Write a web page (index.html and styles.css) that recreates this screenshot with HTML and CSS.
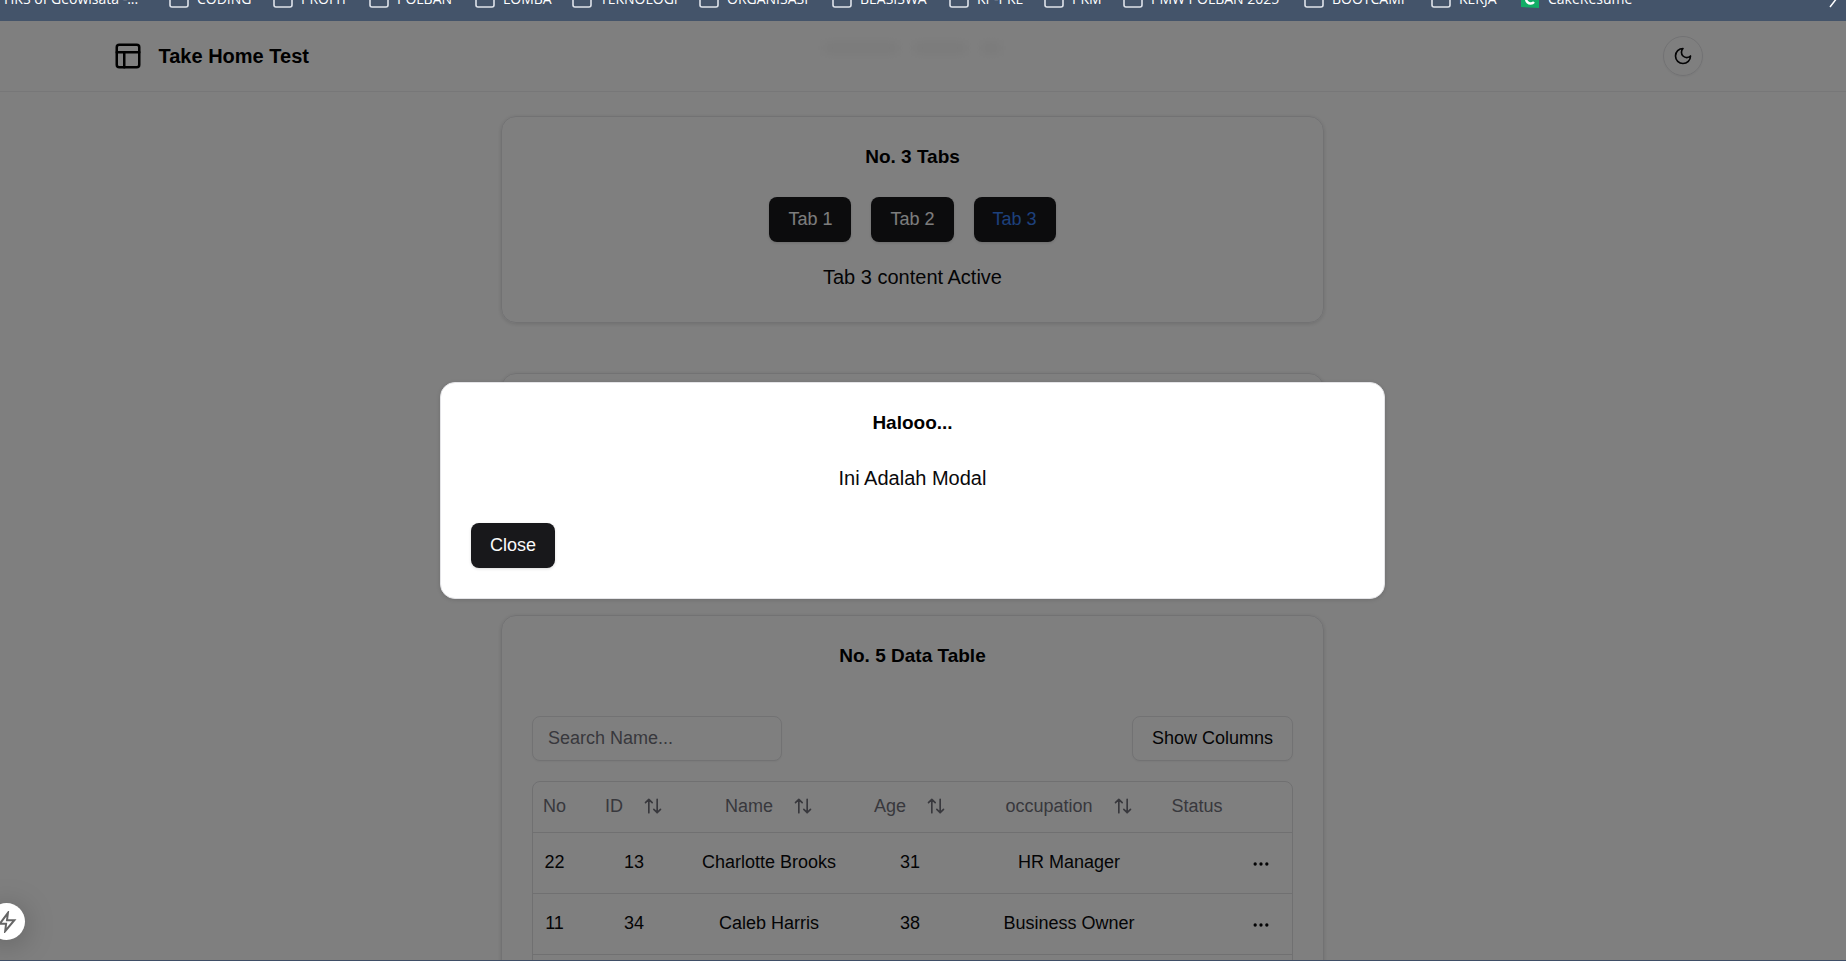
FILE: index.html
```html
<!DOCTYPE html>
<html lang="en">
<head>
<meta charset="utf-8">
<title>Take Home Test</title>
<link rel="stylesheet" href="styles.css">
</head>
<body>
<svg class="defs" aria-hidden="true">
  <symbol id="folder" viewBox="0 0 20 20"><path d="M1 1v15a2 2 0 0 0 2 2h14a2 2 0 0 0 2-2V1z" fill="none" stroke="#dfe3ea" stroke-width="1.6"/></symbol>
  <symbol id="sort" viewBox="0 0 24 24"><path d="m21 16-4 4-4-4M17 20V4M3 8l4-4 4 4M7 4v16" fill="none" stroke="currentColor" stroke-width="2" stroke-linecap="round" stroke-linejoin="round"/></symbol>
  <symbol id="dots" viewBox="0 0 24 24"><g fill="currentColor" stroke="currentColor" stroke-width="2"><circle cx="12" cy="12" r="1"/><circle cx="19" cy="12" r="1"/><circle cx="5" cy="12" r="1"/></g></symbol>
</svg>
<nav class="bookmarks" aria-label="Bookmarks">
  <a href="#" class="first">HKS of Geowisata -...</a>
  <a href="#"><svg><use href="#folder"/></svg>CODING</a>
  <a href="#"><svg><use href="#folder"/></svg>PROFIT</a>
  <a href="#"><svg><use href="#folder"/></svg>POLBAN</a>
  <a href="#"><svg><use href="#folder"/></svg>LOMBA</a>
  <a href="#"><svg><use href="#folder"/></svg>TEKNOLOGI</a>
  <a href="#"><svg><use href="#folder"/></svg>ORGANISASI</a>
  <a href="#"><svg><use href="#folder"/></svg>BEASISWA</a>
  <a href="#"><svg><use href="#folder"/></svg>KP-PKL</a>
  <a href="#"><svg><use href="#folder"/></svg>PKM</a>
  <a href="#"><svg><use href="#folder"/></svg>PMW POLBAN 2025</a>
  <a href="#"><svg><use href="#folder"/></svg>BOOTCAMP</a>
  <a href="#"><svg><use href="#folder"/></svg>KERJA</a>
  <a href="#"><svg viewBox="0 0 20 20"><path d="M1 0h18v19L1 18z" fill="#12ad66"/><path d="M14 13a4.500 4.500 0 1 1 0-6" fill="none" stroke="#fff" stroke-width="2.500"/></svg>CakeResume</a>
  <button class="more" aria-label="More bookmarks"><svg viewBox="0 0 20 20"><path d="m6 1 7 8-7 9" fill="none" stroke="#fff" stroke-width="1.500"/></svg></button>
</nav>
<div class="page">
  <header class="header">
    <div class="bar">
      <a href="#" class="brand"><svg viewBox="0 0 24 24" fill="none" stroke="currentColor" stroke-width="2" stroke-linecap="round" stroke-linejoin="round"><rect x="3" y="3" width="18" height="18" rx="2"/><path d="M3 9h18M9 21V9"/></svg>Take Home Test</a>
      <div class="ghost" aria-hidden="true"><i></i><i></i><i class="short"></i></div>
      <button class="theme" aria-label="Toggle theme"><svg viewBox="0 0 24 24" fill="none" stroke="currentColor" stroke-width="2" stroke-linecap="round" stroke-linejoin="round"><path d="M12 3a6 6 0 0 0 9 9 9 9 0 1 1-9-9Z"/></svg></button>
    </div>
  </header>
  <main class="stack">
    <section class="card">
      <h2>No. 3 Tabs</h2>
      <div class="tabs" role="tablist">
        <button class="btn" role="tab">Tab 1</button>
        <button class="btn" role="tab">Tab 2</button>
        <button class="btn active" role="tab" aria-selected="true">Tab 3</button>
      </div>
      <p class="lead">Tab 3 content Active</p>
    </section>
    <section class="card blank"></section>
    <section class="card">
      <h2>No. 5 Data Table</h2>
      <div class="tools">
        <input class="search" type="text" placeholder="Search Name..." aria-label="Search Name">
        <button class="btn outline">Show Columns</button>
      </div>
      <div class="frame">
        <table>
          <colgroup><col class="c-no"><col class="c-id"><col class="c-name"><col class="c-age"><col class="c-job"><col class="c-status"><col></colgroup>
          <thead>
            <tr><th>No</th><th><button class="sort">ID<svg><use href="#sort"/></svg></button></th><th><button class="sort">Name<svg><use href="#sort"/></svg></button></th><th><button class="sort">Age<svg><use href="#sort"/></svg></button></th><th><button class="sort">occupation<svg><use href="#sort"/></svg></button></th><th>Status</th><th></th></tr>
          </thead>
          <tbody>
            <tr><td>22</td><td>13</td><td>Charlotte Brooks</td><td>31</td><td>HR Manager</td><td></td><td><button class="dots" aria-label="Row actions"><svg><use href="#dots"/></svg></button></td></tr>
            <tr><td>11</td><td>34</td><td>Caleb Harris</td><td>38</td><td>Business Owner</td><td></td><td><button class="dots" aria-label="Row actions"><svg><use href="#dots"/></svg></button></td></tr>
            <tr><td></td><td></td><td></td><td></td><td></td><td></td><td></td></tr>
          </tbody>
        </table>
      </div>
    </section>
  </main>
  <div class="overlay">
    <div class="modal" role="dialog" aria-modal="true" aria-labelledby="modal-title">
      <h2 id="modal-title">Halooo...</h2>
      <p class="lead">Ini Adalah Modal</p>
      <button class="btn close">Close</button>
    </div>
  </div>
  <button class="bolt" aria-label="Developer tools"><svg viewBox="0 0 24 24" fill="none" stroke="#666" stroke-width="2.200" stroke-linejoin="miter"><path d="M13 2 4 14h7l-1 8 10-12h-8z"/></svg></button>
</div>
</body>
</html>
```

FILE: styles.css
```css
* { box-sizing: border-box; }
html, body { height: 100%; }
body {
  margin: 0;
  display: flex;
  flex-direction: column;
  overflow: hidden;
  background: #fff;
  color: #09090b;
  font: 18px/24px "Liberation Sans", Arial, sans-serif;
  border-bottom: 1px solid #3f4e66;
}
h2, p { margin: 0; }
button, input { font: inherit; color: inherit; }
button { border: 0; background: none; padding: 0; }
a { color: inherit; text-decoration: none; }
svg { flex: none; }
.defs { position: absolute; width: 0; height: 0; }

.bookmarks {
  flex: none;
  height: 21px;
  overflow: hidden;
  display: grid;
  grid-template-columns: 169px 104px 96px 106px 97px 127px 133px 117px 95px 79px 181px 127px 89px 1fr 24px;
  background: #44546a;
  color: #fff;
  font: 14px/20px "Open Sans", "Noto Sans", sans-serif;
}
.bookmarks a { display: flex; align-items: center; gap: 8px; height: 20px; margin-top: -11px; white-space: nowrap; }
.bookmarks svg { width: 20px; height: 20px; }
.bookmarks a.first { padding-left: 4px; }
.more { height: 20px; margin-top: -11px; }

.page { position: relative; flex: 1; min-height: 0; overflow: hidden; }
.header { padding-right: 21px; border-bottom: 1px solid #efeff1; }
.bar {
  max-width: 1600px;
  height: 70px;
  margin: 0 auto;
  padding-right: 9px;
  display: flex;
  align-items: center;
  justify-content: space-between;
}
.brand { display: flex; align-items: center; gap: 16px; font-size: 20px; font-weight: 700; color: #000; }
.brand svg { width: 30px; height: 30px; }
.ghost { display: flex; gap: 14px; padding-bottom: 16px; margin-right: 148px; filter: blur(5px); }
.ghost i { width: 76px; height: 12px; background: #f6f6f6; }
.ghost i:nth-child(2) { width: 54px; }
.ghost .short { width: 20px; }
.theme {
  width: 40px;
  height: 40px;
  display: grid;
  place-items: center;
  border: 1px solid #e4e4e7;
  border-radius: 50%;
  box-shadow: 0 1px 2px rgba(0, 0, 0, .05);
}
.theme svg { width: 20px; height: 20px; }

.stack { display: flex; flex-direction: column; align-items: center; gap: 50px; padding: 24px 21px 0 0; }
.card {
  width: 100%;
  max-width: 823px;
  padding: 30px;
  border: 1px solid #e4e4e7;
  border-radius: 15px;
  box-shadow: 0 1px 4px rgba(0, 0, 0, .14);
}
.blank { min-height: 192px; }
h2 { text-align: center; font-size: 19px; line-height: 20px; color: #000; }
.lead { text-align: center; font-size: 20px; line-height: 30px; }
.tabs { display: flex; justify-content: center; gap: 20px; margin: 30px 0 20px; }
.btn {
  height: 45px;
  padding: 0 19px 2px;
  border-radius: 8px;
  background: #18181b;
  color: #fafafa;
  box-shadow: 0 1px 3px rgba(0, 0, 0, .15);
}
.active { color: #3b82f6; }
.outline { background: #fff; border: 1px solid #e4e4e7; color: #09090b; box-shadow: 0 1px 2px rgba(0, 0, 0, .05); }

.tools { display: flex; justify-content: space-between; margin: 50px 0 20px; }
.search {
  width: 250px;
  height: 45px;
  padding: 0 15px;
  border: 1px solid #e4e4e7;
  border-radius: 8px;
  background: #fff;
  box-shadow: 0 1px 2px rgba(0, 0, 0, .05);
}
.search::placeholder { color: #71717a; opacity: 1; }
.frame { border: 1px solid #e0e0e3; border-radius: 8px; }
table { width: 100%; table-layout: fixed; border-collapse: collapse; }
.c-no { width: 43px; }
.c-id { width: 116px; }
.c-name { width: 154px; }
.c-age { width: 128px; }
.c-job { width: 190px; }
.c-status { width: 66px; }
th, td { padding: 0 0 2px; text-align: center; white-space: nowrap; }
th { height: 50px; font-weight: 400; color: #71717a; }
td { height: 61px; }
tr { border-bottom: 1px solid #e0e0e3; }
.sort { display: inline-flex; align-items: center; gap: 20px; }
.sort svg, .dots svg { width: 20px; height: 20px; }
.dots { display: block; margin: 0 auto; padding-top: 4px; }
.dots svg { display: block; }

.overlay {
  position: absolute;
  inset: 0;
  display: grid;
  place-items: center;
  padding-right: 21px;
  background: rgba(0, 0, 0, .5);
}
.modal {
  width: 100%;
  max-width: 945px;
  padding: 30px;
  border: 1px solid #e4e4e7;
  border-radius: 15px;
  background: #fff;
  box-shadow: 0 1px 4px rgba(0, 0, 0, .14);
}
.modal .lead { margin: 30px 0; }
.close { display: block; }
.bolt {
  position: absolute;
  left: -12px;
  bottom: 20px;
  width: 37px;
  height: 37px;
  display: grid;
  place-items: center;
  border-radius: 50%;
  background: #fff;
  box-shadow: 0 4px 30px rgba(0, 0, 0, .25);
}
.bolt svg { width: 22px; height: 22px; }
```
